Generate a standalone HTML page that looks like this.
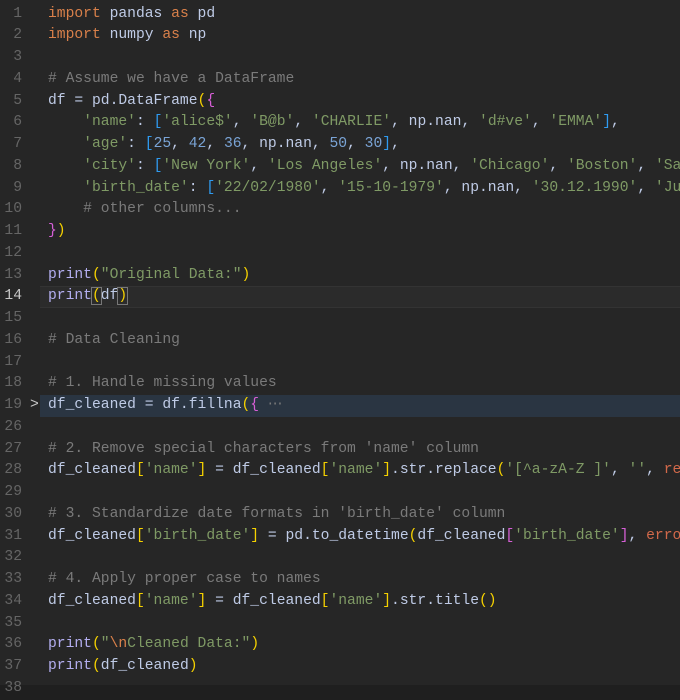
<!DOCTYPE html><html><head><style>
body{margin:0;width:680px;height:683px;background:#1f1f1f;overflow:hidden;font-family:"Liberation Mono",monospace;font-size:14.67px}
.ed{position:absolute;left:0;top:1.5px;width:680px;height:683px;background:#262626}
.l{position:absolute;left:0;width:680px;height:21.75px;line-height:21.75px;white-space:pre}
.n{position:absolute;left:0;width:22px;text-align:right;color:#656565}
.c{position:absolute;left:48px;color:#bfcbe6}
.k{color:#d9804a}.s{color:#7f9a65}.m{color:#7a7a7a}.nu{color:#7aa4d6}.f{color:#b3aef0}
.y{color:#f5d100}.p{color:#d65fd6}.b{color:#2f9bf0}.e{color:#d9804a}.r{color:#d2694a}
</style></head><body><div style="position:absolute;left:0;top:0;width:680px;height:2px;background:#262626"></div><div class="ed">
<div class="l" style="top:284.75px;background:#2b2b2b;left:40px;width:640px;border-top:1px solid #333;border-bottom:1px solid #333;box-sizing:border-box"></div>
<div class="l" style="top:393.5px;background:#2a3542;left:40px;width:640px"></div>

<div class="l" style="top:2px"><span class="n">1</span><span class="c"><span class="k">import</span> pandas <span class="k">as</span> pd</span></div>
<div class="l" style="top:23.75px"><span class="n">2</span><span class="c"><span class="k">import</span> numpy <span class="k">as</span> np</span></div>
<div class="l" style="top:45.5px"><span class="n">3</span></div>
<div class="l" style="top:67.25px"><span class="n">4</span><span class="c m"># Assume we have a DataFrame</span></div>
<div class="l" style="top:89px"><span class="n">5</span><span class="c">df = pd.DataFrame<span class="y">(</span><span class="p">{</span></span></div>
<div class="l" style="top:110.75px"><span class="n">6</span><span class="c">    <span class="s">'name'</span>: <span class="b">[</span><span class="s">'alice$'</span>, <span class="s">'B@b'</span>, <span class="s">'CHARLIE'</span>, np.nan, <span class="s">'d#ve'</span>, <span class="s">'EMMA'</span><span class="b">]</span>,</span></div>
<div class="l" style="top:132.5px"><span class="n">7</span><span class="c">    <span class="s">'age'</span>: <span class="b">[</span><span class="nu">25</span>, <span class="nu">42</span>, <span class="nu">36</span>, np.nan, <span class="nu">50</span>, <span class="nu">30</span><span class="b">]</span>,</span></div>
<div class="l" style="top:154.25px"><span class="n">8</span><span class="c">    <span class="s">'city'</span>: <span class="b">[</span><span class="s">'New York'</span>, <span class="s">'Los Angeles'</span>, np.nan, <span class="s">'Chicago'</span>, <span class="s">'Boston'</span>, <span class="s">'San</span></span></div>
<div class="l" style="top:176px"><span class="n">9</span><span class="c">    <span class="s">'birth_date'</span>: <span class="b">[</span><span class="s">'22/02/1980'</span>, <span class="s">'15-10-1979'</span>, np.nan, <span class="s">'30.12.1990'</span>, <span class="s">'Jul</span></span></div>
<div class="l" style="top:197.75px"><span class="n">10</span><span class="c m">    # other columns...</span></div>
<div class="l" style="top:219.5px"><span class="n">11</span><span class="c"><span class="p">}</span><span class="y">)</span></span></div>
<div class="l" style="top:241.25px"><span class="n">12</span></div>
<div class="l" style="top:263px"><span class="n">13</span><span class="c"><span class="f">print</span><span class="y">(</span><span class="s">"Original Data:"</span><span class="y">)</span></span></div>
<div class="l" style="top:284.75px"><span class="n" style="color:#c8c8c8">14</span><span class="c"><span class="f">print</span><span class="y" style="outline:1px solid #777">(</span>df<span class="y" style="outline:1px solid #777">)</span></span></div>
<div class="l" style="top:306.5px"><span class="n">15</span></div>
<div class="l" style="top:328.25px"><span class="n">16</span><span class="c m"># Data Cleaning</span></div>
<div class="l" style="top:350px"><span class="n">17</span></div>
<div class="l" style="top:371.75px"><span class="n">18</span><span class="c m"># 1. Handle missing values</span></div>
<div class="l" style="top:393.5px"><span class="n">19</span><span style="position:absolute;left:30px;color:#c8c8c8">&gt;</span><span class="c">df_cleaned = df.fillna<span class="y">(</span><span class="p">{</span> <span class="m">⋯</span></span></div>
<div class="l" style="top:415.25px"><span class="n">26</span></div>
<div class="l" style="top:437px"><span class="n">27</span><span class="c m"># 2. Remove special characters from 'name' column</span></div>
<div class="l" style="top:458.75px"><span class="n">28</span><span class="c">df_cleaned<span class="y">[</span><span class="s">'name'</span><span class="y">]</span> = df_cleaned<span class="y">[</span><span class="s">'name'</span><span class="y">]</span>.str.replace<span class="y">(</span><span class="s">'[^a-zA-Z ]'</span>, <span class="s">''</span>, <span class="r">re</span></span></div>
<div class="l" style="top:480.5px"><span class="n">29</span></div>
<div class="l" style="top:502.25px"><span class="n">30</span><span class="c m"># 3. Standardize date formats in 'birth_date' column</span></div>
<div class="l" style="top:524px"><span class="n">31</span><span class="c">df_cleaned<span class="y">[</span><span class="s">'birth_date'</span><span class="y">]</span> = pd.to_datetime<span class="y">(</span>df_cleaned<span class="p">[</span><span class="s">'birth_date'</span><span class="p">]</span>, <span class="r">erro</span></span></div>
<div class="l" style="top:545.75px"><span class="n">32</span></div>
<div class="l" style="top:567.5px"><span class="n">33</span><span class="c m"># 4. Apply proper case to names</span></div>
<div class="l" style="top:589.25px"><span class="n">34</span><span class="c">df_cleaned<span class="y">[</span><span class="s">'name'</span><span class="y">]</span> = df_cleaned<span class="y">[</span><span class="s">'name'</span><span class="y">]</span>.str.title<span class="y">()</span></span></div>
<div class="l" style="top:611px"><span class="n">35</span></div>
<div class="l" style="top:632.75px"><span class="n">36</span><span class="c"><span class="f">print</span><span class="y">(</span><span class="s">"<span class="e">\n</span>Cleaned Data:"</span><span class="y">)</span></span></div>
<div class="l" style="top:654.5px"><span class="n">37</span><span class="c"><span class="f">print</span><span class="y">(</span>df_cleaned<span class="y">)</span></span></div>
<div class="l" style="top:676.25px"><span class="n">38</span></div>
</div></body></html>
